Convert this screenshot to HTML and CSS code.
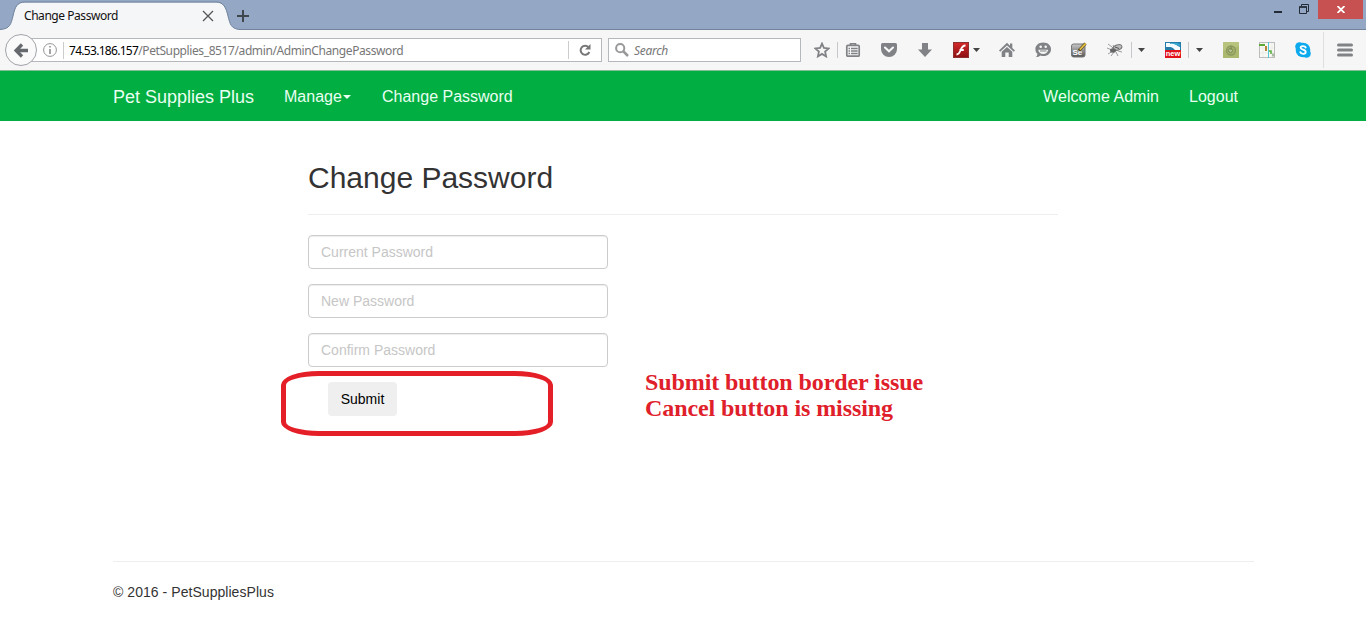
FILE: index.html
```html
<!DOCTYPE html>
<html lang="en">
<head>
<meta charset="utf-8">
<title>Change Password</title>
<link rel="stylesheet" href="styles.css">
</head>
<body>
<div class="tabstrip">
  <div class="tab">
    <svg class="tab-shape" width="242" height="30" viewBox="0 0 242 30"><path d="M0 29.5C10 29 11 24 13 16C15 7 17 2.500 25 2.500H216C224 2.500 226 8 228 16C230 24 231 29 240 29.500V30H0Z" fill="#f5f6f7"/><path d="M0 29.500C10 29 11 24 13 16C15 7 17 2 25 2H216C224 2 226 8 228 16C230 24 231 29 240 29.500" fill="none" stroke="#6f829c"/></svg>
    <span class="tab-title">Change Password</span>
    <svg class="tab-close" width="12" height="12" viewBox="0 0 12 12"><path d="M1 1L11 11M11 1L1 11" stroke="#555" stroke-width="1.300"/></svg>
  </div>
  <svg class="new-tab" width="12" height="12" viewBox="0 0 12 12"><path d="M6 0V12M0 6H12" stroke="#40464e" stroke-width="2"/></svg>
  <div class="window-buttons">
    <svg width="8" height="11" viewBox="0 0 8 11"><path d="M0 10H8" stroke="#222b36" stroke-width="2"/></svg>
    <svg width="10" height="10" viewBox="0 0 10 10"><path d="M2.500 2V.5H9.500V7.500H8" fill="none" stroke="#222b36"/><path d="M.5 3H7.500V9.500H.5Z" fill="none" stroke="#222b36"/><path d="M0 3H8" stroke="#222b36" stroke-width="1.500"/></svg>
    <div class="window-close"><svg width="8" height="7" viewBox="0 0 8 7"><path d="M.5 0L7.500 7M7.500 0L.5 7" stroke="#fff" stroke-width="1.800"/></svg></div>
  </div>
</div>
<div class="toolbar">
  <div class="back"><svg width="15" height="15" viewBox="0 0 15 15"><path d="M8 1.500L2 7.500L8 13.500M2.500 7.500H14" fill="none" stroke="#666a6e" stroke-width="3.300"/></svg></div>
  <div class="url">
    <svg width="14" height="14" viewBox="0 0 14 14"><circle cx="7" cy="7" r="6.400" fill="none" stroke="#959595"/><path d="M7 3V4.600M7 6V11" stroke="#858585" stroke-width="1.500"/></svg>
    <span class="url-sep"></span>
    <span class="address"><b>74.53.186.157</b>/PetSupplies_8517/admin/AdminChangePassword</span>
    <span class="reload"><svg width="12" height="12" viewBox="0 0 12 12"><path d="M9.500 3.200A4.500 4.500 0 1 0 10.300 8" fill="none" stroke="#777" stroke-width="2"/><path d="M11.500 0V5.500H6Z" fill="#777"/></svg></span>
  </div>
  <div class="search">
    <svg width="14" height="14" viewBox="0 0 14 14"><circle cx="5.200" cy="5.200" r="4.100" fill="none" stroke="#999" stroke-width="2"/><path d="M8 8L13 13" stroke="#999" stroke-width="2.500"/></svg>
    <span>Search</span>
  </div>
  <div class="icons">
    <div class="group star-group">
      <svg width="16" height="16" viewBox="0 0 16 16"><path d="M8 1.600L9.900 5.900L14.700 6.400L11.100 9.600L12.100 14.400L8 11.900L3.900 14.400L4.900 9.600L1.300 6.400L6.100 5.900Z" fill="none" stroke="#808285" stroke-width="1.800"/></svg>
      <span class="sep"></span>
      <svg width="16" height="16" viewBox="0 0 16 16"><path d="M5.500 3V1.800H10.500V3" fill="none" stroke="#808285" stroke-width="1.600"/><rect x="1.800" y="3.400" width="12.400" height="10.800" rx="1" fill="#f6f6f7" stroke="#808285" stroke-width="1.700"/><path d="M3.500 6.500H5M6 6.500H12.700M3.500 9H5M6 9H12.700M3.500 11.500H5M6 11.500H12.700" stroke="#808285" stroke-width="1.400"/></svg>
    </div>
    <svg width="16" height="16" viewBox="0 0 16 16"><path d="M1.500 1H14.500Q16 1 16 2.500V7A8 8 0 0 1 0 7V2.500Q0 1 1.500 1Z" fill="#808285"/><path d="M4 5.500L8 9.300L12 5.500" fill="none" stroke="#f8f8f8" stroke-width="2.100" stroke-linecap="round"/></svg>
    <svg width="16" height="16" viewBox="0 0 16 16"><path d="M5 1H11V7.500H15L8 15L1 7.500H5Z" fill="#808285"/></svg>
    <div class="group flash-group">
      <svg width="16" height="16" viewBox="0 0 16 16"><defs><linearGradient id="flash" x2="0" y2="1"><stop stop-color="#d32a2a"/><stop offset="1" stop-color="#8c1012"/></linearGradient></defs><rect x=".5" y=".5" width="15" height="15" fill="url(#flash)" stroke="#8f3030"/><path d="M12.500 3.500C9 3.500 8.500 6 7.500 8.500S5.500 12.500 3.500 12.500M6.500 8H10.800" fill="none" stroke="#fff" stroke-width="1.800"/></svg>
      <span class="caret"></span>
    </div>
    <svg width="16" height="16" viewBox="0 0 16 16"><path d="M8 .8L0 8.500L1.200 9.700L8 3.500L14.800 9.700L16 8.500L13.300 5.900V1.500H11V3.700Z" fill="#808285"/><path d="M2.700 9.800L8 5L13.300 9.800V15H9.700V10.500H6.300V15H2.700Z" fill="#808285"/></svg>
    <svg width="16" height="16" viewBox="0 0 16 16"><path d="M8.200 .5C13 .5 16 3.400 16 7.200S13 14 8.500 14C7.300 14 6.500 13.800 5.500 13.400C4 14.600 2.800 15 1 15C2 14 2.400 13 2.400 11.800C1 10.600 .4 9 .4 7.200C.4 3.400 3.500 .5 8.200 .5Z" fill="#808285"/><circle cx="5.700" cy="4.800" r="1.300" fill="#f6f6f7"/><circle cx="10.700" cy="4.800" r="1.300" fill="#f6f6f7"/><path d="M3.200 7.700H13.200C12.500 10.600 10.700 12 8.200 12S3.900 10.600 3.200 7.700Z" fill="#f6f6f7"/><path d="M5 9H11.500" stroke="#808285"/></svg>
    <svg width="16" height="16" viewBox="0 0 16 16"><defs><linearGradient id="se" x2="0" y2="1"><stop stop-color="#c9c9c9"/><stop offset="1" stop-color="#555"/></linearGradient></defs><rect x=".5" y="2" width="13.500" height="13" rx="2" fill="url(#se)" stroke="#777"/><text x="1.500" y="13" class="se-text">Se</text><path d="M8 8.500L14.500 1.500" stroke="#51451d" stroke-width="3"/><path d="M8.800 7.700L14.800 1.300" stroke="#e3bd45" stroke-width="1.800"/></svg>
    <div class="group">
      <svg width="16" height="16" viewBox="0 0 16 16"><path d="M1 2L5 5L8 8M0 6L5 8M1 12L6 9M4 14L7 10M9 10L11 14M11 9L15 10M7 6L6 3" stroke="#999b9e" fill="none"/><ellipse cx="10.500" cy="5.500" rx="4.500" ry="2.600" transform="rotate(-18 10.500 5.500)" fill="#bbb" stroke="#777"/><ellipse cx="6" cy="8.500" rx="3" ry="2.200" fill="#666"/><path d="M8 5L12 6.500" stroke="#555"/></svg>
      <span class="sep bug-sep"></span><span class="caret bug-caret"></span>
    </div>
    <div class="group">
      <svg width="16" height="16" viewBox="0 0 16 16"><rect width="16" height="9" fill="#247ca8"/><path d="M1 1H6C10 1 12 4 15 5V8H10C7 4 4 5 1 5Z" fill="#f3fbff"/><path d="M5 2C9 1 11 4 15 4V2L12 1H5Z" fill="#39a8d0"/><rect y="8" width="16" height="8" fill="#e3131b"/><text x="8" y="14.200" text-anchor="middle" class="new-text">new</text></svg>
      <span class="sep new-sep"></span><span class="caret new-caret"></span>
    </div>
    <svg width="16" height="16" viewBox="0 0 16 16"><rect width="16" height="16" fill="#abb96f"/><path d="M0 0H16V4L0 9Z" fill="#b8c47e"/><circle cx="8" cy="8.500" r="4.500" fill="#a1af69" stroke="#8b9860" stroke-width="1.300"/><circle cx="7.500" cy="8.500" r="2" fill="#bac394" stroke="#7d8a52"/><path d="M8 4V8" stroke="#7d8a52"/></svg>
    <svg width="16" height="16" viewBox="0 0 16 16"><rect x=".5" y=".5" width="15" height="15" fill="#f8f8f5" stroke="#bcbcbc"/><path d="M1 6H15M1 11H15M4 1V15M13 1V15" stroke="#ebebe7"/><path d="M0 3H6" stroke="#5ba832" stroke-width="2"/><path d="M7 4V9" stroke="#b58432" stroke-width="2"/><path d="M9.500 0V16" stroke="#55c5d8"/><path d="M10 9H12V12" fill="none" stroke="#58ae3d" stroke-width="1.500"/><path d="M13 13H16" stroke="#aab8a6" stroke-width="3"/></svg>
    <svg width="16" height="16" viewBox="0 0 16 16"><g fill="#0daaed"><circle cx="8" cy="8" r="7.300"/><circle cx="4.500" cy="4.500" r="4.300"/><circle cx="11.500" cy="11.500" r="4.300"/></g><path d="M10.700 5.500C9.800 3.700 5.600 3.800 5.600 5.800C5.600 8.200 10.700 7.200 10.700 9.900C10.700 12.200 6.200 12.500 5.300 10.200" fill="none" stroke="#fff" stroke-width="1.800" stroke-linecap="round"/></svg>
  </div>
  <span class="menu-sep"></span>
  <svg class="menu" width="16" height="14" viewBox="0 0 16 14"><path d="M1.500 2H14.500M1.500 7H14.500M1.500 12H14.500" stroke="#808285" stroke-width="3" stroke-linecap="round"/></svg>
</div>
<nav class="navbar">
  <span class="brand">Pet Supplies Plus</span>
  <span class="nav-item manage">Manage<i class="nav-caret"></i></span>
  <span class="nav-item">Change Password</span>
  <span class="nav-item welcome">Welcome Admin</span>
  <span class="nav-item">Logout</span>
</nav>
<main class="content">
  <h2>Change Password</h2>
  <form class="form">
    <input type="password" placeholder="Current Password">
    <input type="password" placeholder="New Password">
    <input type="password" placeholder="Confirm Password">
    <button type="button">Submit</button>
  </form>
</main>
<footer>© 2016 - PetSuppliesPlus</footer>
<div class="callout-ring"></div>
<div class="callout">Submit button border issue<br>Cancel button is missing</div>
</body>
</html>
```
FILE: styles.css
```css
* { box-sizing: border-box; }
body { margin: 0; width: 1366px; height: 629px; overflow: hidden; position: relative; background: #fff; color: #333; font: 14px/20px "Liberation Sans", Arial, sans-serif; }
svg { display: block; flex: none; }
.tabstrip { height: 30px; display: flex; background: #94a8c6; box-shadow: inset 0 -1px #71839b; font: 12px/16px "Noto Sans", "Open Sans", sans-serif; }
.tab { position: relative; width: 237px; height: 30px; display: flex; align-items: flex-start; padding: 8px 0 0 24px; color: #111; }
.tab-shape { position: absolute; left: 0; top: 0; }
.tab-title { position: relative; width: 178px; letter-spacing: -.45px; white-space: nowrap; }
.tab-close { position: relative; margin-top: 2px; }
.new-tab { margin-top: 10px; }
.window-buttons { margin-left: auto; display: flex; align-items: flex-start; padding-right: 3px; }
.window-buttons > svg:nth-child(1) { margin: 2px 17px 0 0; }
.window-buttons > svg:nth-child(2) { margin: 4px 9px 0 0; }
.window-close { width: 45px; height: 19px; display: flex; align-items: center; justify-content: center; background: #c75050; }
.toolbar { height: 41px; display: flex; align-items: center; background: #f6f6f7; border-bottom: 1px solid #82bd91; }
.back { position: relative; z-index: 1; width: 32px; height: 32px; margin-left: 5px; display: flex; align-items: center; justify-content: center; background: #fafafa; border: 1px solid #a0a3a8; border-radius: 50%; flex: none; }
.url, .search { height: 24px; display: flex; align-items: center; background: #fff; border: 1px solid #b5b8bd; font: 12px/16px "Noto Sans", "Open Sans", sans-serif; flex: none; }
.url { width: 581px; margin-left: -16px; padding-left: 21px; }
.url-sep { width: 1px; height: 17px; background: #ccc; margin: 0 5px 0 6px; }
.address { padding-top: 2px; color: #777; white-space: nowrap; letter-spacing: -.4px; }
.address b { color: #000; font-weight: normal; letter-spacing: -.7px; }
.reload { width: 33px; height: 18px; margin-left: auto; border-left: 1px solid #ccc; display: flex; align-items: center; justify-content: center; }
.search { width: 193px; margin-left: 6px; padding-left: 6px; gap: 5px; color: #777; font-style: italic; }
.search span { padding-top: 2px; letter-spacing: -.3px; }
.icons { display: flex; align-items: center; gap: 20px; margin-left: 13px; }
.group { display: flex; align-items: center; }
.star-group { gap: 7px; }
.flash-group { width: 26px; }
.sep { width: 1px; height: 16px; background: #c6c8cb; }
.caret { width: 7px; height: 4px; background: #444; clip-path: polygon(0 0, 100% 0, 50% 100%); margin-left: 4px; flex: none; }
.bug-sep { margin-left: 8px; }
.bug-caret { margin-left: 6px; }
.new-sep { margin-left: 7px; }
.new-caret { margin-left: 7px; }
.se-text { font: bold 8px "Liberation Sans", sans-serif; fill: #fff; }
.new-text { font: bold 7.5px "Liberation Sans", sans-serif; fill: #fff; }
.menu-sep { width: 1px; height: 36px; margin-left: 12px; background: #dedfe1; }
.menu { margin-left: 13px; }
.navbar { height: 50px; display: flex; align-items: center; padding: 2px 128px 0 113px; background: #00ae42; color: #e9fff0; font-size: 16px; }
.brand { font-size: 18px; width: 171px; white-space: nowrap; }
.nav-item { white-space: nowrap; }
.manage { width: 98px; display: flex; align-items: center; }
.nav-caret { width: 8px; height: 4px; margin: 0 0 0 1px; border: 4px solid transparent; border-top-color: #e9fff0; border-bottom: 0; }
.welcome { margin: 0 30px 0 auto; letter-spacing: .05px; }
.content { margin-left: 308px; width: 750px; height: 440px; padding-top: 40px; }
h2 { margin: 0 0 20px; height: 54px; border-bottom: 1px solid #eee; font-size: 30px; line-height: 33px; font-weight: normal; }
.form { display: flex; flex-direction: column; align-items: flex-start; gap: 15px; }
.form input { width: 300px; height: 34px; padding: 6px 12px; border: 1px solid #ccc; border-radius: 4px; box-shadow: inset 0 1px 1px rgba(0,0,0,.075); font: 14px/20px "Liberation Sans", Arial, sans-serif; }
.form input::placeholder { color: #c6c6c6; opacity: 1; }
.form button { width: 69px; height: 34px; margin-left: 20px; padding: 0; border: 0; border-radius: 4px; background: #efefef; color: #000; font: 14px/20px "Liberation Sans", Arial, sans-serif; }
footer { margin-left: 113px; width: 1141px; border-top: 1px solid #eee; padding-top: 20px; letter-spacing: .05px; }
.callout-ring { position: absolute; left: 281px; top: 371px; width: 272px; height: 65px; border: 5px solid #e41f27; border-radius: 38px / 14px; }
.callout { position: absolute; left: 645px; top: 369px; color: #df202a; font: bold 24px/26px "Liberation Serif", "Times New Roman", serif; letter-spacing: -.09px; white-space: nowrap; }
```
